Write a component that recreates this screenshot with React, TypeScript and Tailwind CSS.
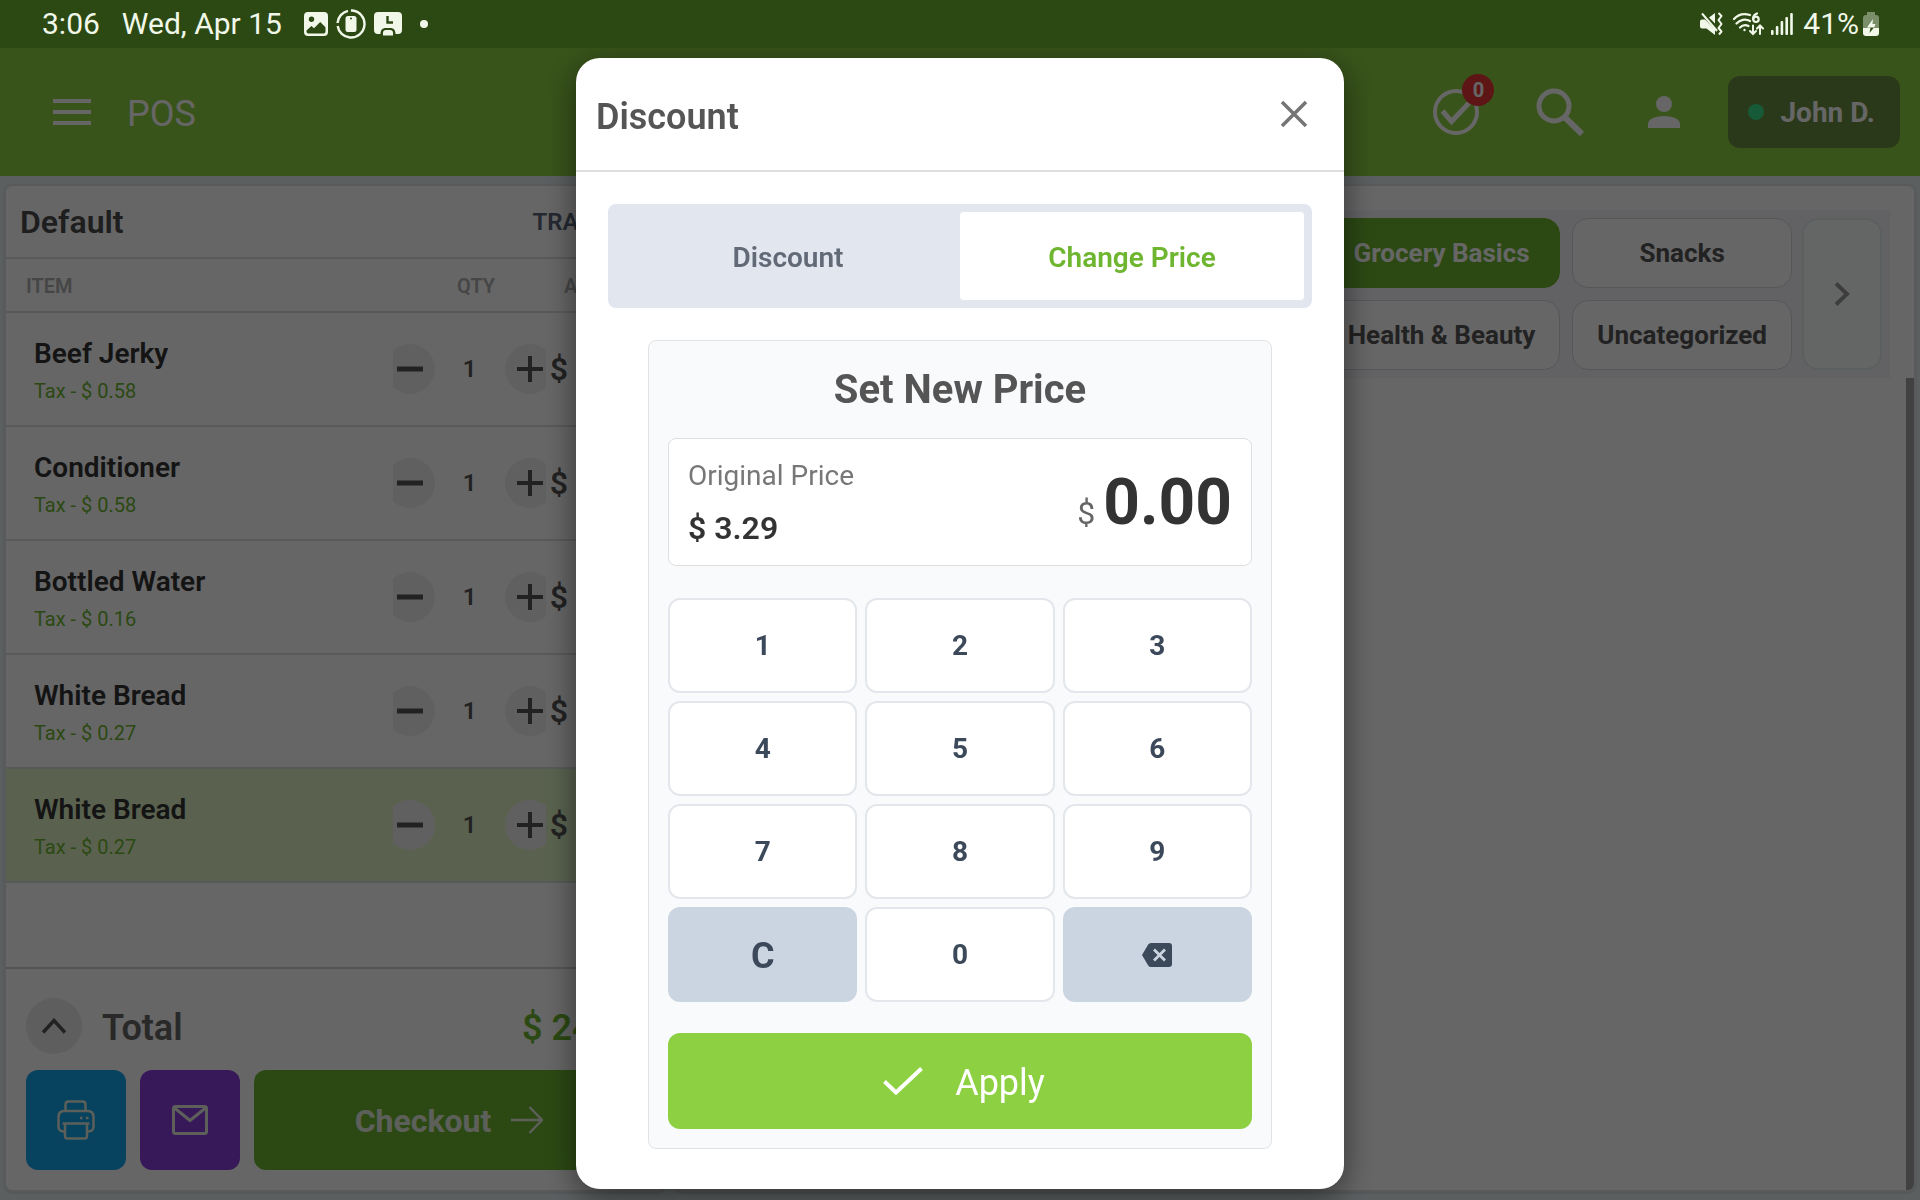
import { useState, type ReactNode } from "react";

const CART_ITEMS = [
  { name: "Beef Jerky", tax: "0.58", qty: 1, amount: "7.19" },
  { name: "Conditioner", tax: "0.58", qty: 1, amount: "7.19" },
  { name: "Bottled Water", tax: "0.16", qty: 1, amount: "1.99" },
  { name: "White Bread", tax: "0.27", qty: 1, amount: "3.29" },
  { name: "White Bread", tax: "0.27", qty: 1, amount: "3.29", selected: true },
];

const CATEGORIES = ["Grocery Basics", "Snacks", "Health & Beauty", "Uncategorized"];

const DIGITS = ["1", "2", "3", "4", "5", "6", "7", "8", "9"];

function StatusBar() {
  return (
    <div className="relative z-20 flex h-12 items-center justify-between bg-[#2c4913] pl-[42px] pr-[41px] text-[30px] leading-none text-[#f1f8ea]">
      <div className="flex items-center">
        <span>3:06</span>
        <span className="ml-[22px]">Wed, Apr 15</span>
        <svg className="ml-[22px] size-6" viewBox="0 0 24 24" fill="currentColor">
          <path
            fillRule="evenodd"
            d="M4 0h16a4 4 0 0 1 4 4v16a4 4 0 0 1-4 4H4a4 4 0 0 1-4-4V4a4 4 0 0 1 4-4Zm3.500 4.500a2.700 2.700 0 1 0 0 5.400 2.700 2.700 0 0 0 0-5.400ZM2.500 19.500q0 2 2 2h15q2 0 2-2v-4.200l-5.300-5.300-6.200 6.300-2.600-2.400-4.900 4.600Z"
          />
        </svg>
        <svg className="ml-2 size-[30px]" viewBox="0 0 30 30" fill="none">
          <circle cx="15" cy="15" r="13.500" stroke="currentColor" strokeWidth="2.400" strokeDasharray="60 3 17 3" transform="rotate(-85 15 15)" />
          <rect x="9.500" y="7" width="11" height="16" rx="2.500" fill="currentColor" />
          <circle cx="15" cy="9.500" r="1" fill="#2c4913" />
        </svg>
        <svg className="ml-2 h-6 w-7" viewBox="0 0 28 24" fill="none">
          <path d="M4 0h20a4 4 0 0 1 4 4v14a4 4 0 0 1-4 4h-2.500c0-4-2-6-5-6h-5c-3 0-5 2-5 6H4a4 4 0 0 1-4-4V4a4 4 0 0 1 4-4Z" fill="currentColor" />
          <path d="M13.500 4v6.500H19" stroke="#2c4913" strokeWidth="2.400" />
          <path d="M9 23.500V21q0-3 3-3h4q3 0 3 3v2.500Z" fill="currentColor" />
        </svg>
        <span className="ml-[18px] size-2 rounded-full bg-current" />
      </div>
      <div className="flex items-center">
        <svg className="h-6 w-6" viewBox="0 0 24 24" fill="currentColor">
          <path d="M0 9.500Q0 7.500 2 7.500h3L15 17.500V23L6.500 16.500H2q-2 0-2-2ZM9 5.500l6-4.500v10.500Z" />
          <path d="M2 1.500 17 19" stroke="currentColor" strokeWidth="2" />
          <path d="m18.500 1 3 3-3 4 3 4-3 4 3 3.500-2.500 3" fill="none" stroke="currentColor" strokeWidth="2" strokeLinejoin="round" />
        </svg>
        <svg className="ml-2 h-6 w-8" viewBox="0 0 32 24" fill="none" stroke="currentColor" strokeWidth="2.200" strokeLinecap="round">
          <path d="M2 7C6 2.500 12 1 18 3M4.500 11.500c3.500-4 9-5 13.500-2.500M8 15.500c2.500-2.500 5.500-3 8.500-1.500" />
          <circle cx="12.500" cy="18" r="1.200" fill="currentColor" stroke="none" />
          <path d="M25 1.500c-3 1-4 3-4 5.500" />
          <circle cx="24" cy="7.300" r="2.700" />
          <path d="M21 13.500V22m-3-3 3 3 3-3M28 22v-8.500m-3 3 3-3 3 3" strokeWidth="2" />
        </svg>
        <svg className="ml-[7px] h-6 w-[22px]" viewBox="0 0 22 24" fill="currentColor">
          <rect x="0" y="18" width="2.600" height="5" rx="1" />
          <rect x="4.800" y="14" width="2.600" height="9" rx="1" />
          <rect x="9.600" y="9" width="2.600" height="14" rx="1" />
          <rect x="14.400" y="5" width="2.600" height="18" rx="1" />
          <rect x="19.200" y="1" width="2.600" height="22" rx="1" />
        </svg>
        <span className="ml-[10px]">41%</span>
        <svg className="ml-1 h-6 w-4" viewBox="0 0 16 24" fill="currentColor">
          <path d="M4 0h8v3h1q3 0 3 3v10H0V6q0-3 3-3h1Z" opacity="0.400" />
          <path d="M0 16h16v5q0 3-3 3H3q-3 0-3-3Z" />
          <path d="m10 7-6 8.500h3.500v.500H11l1.500-4H9.500Z" />
          <path d="M7.500 15.500H11l-4.500 5.500Z" fill="#2c4913" />
        </svg>
      </div>
    </div>
  );
}

function AppHeader() {
  return (
    <header className="flex h-32 items-center justify-between bg-[#8dd143] pl-[53px] pr-5 text-white">
      <div className="flex items-center">
        <button type="button" aria-label="Menu" className="flex w-[38px] flex-col gap-[7px]">
          <span className="h-1 bg-white" />
          <span className="h-1 bg-white" />
          <span className="h-1 bg-white" />
        </button>
        <h1 className="ml-9 mt-1 text-4xl font-normal">POS</h1>
      </div>
      <div className="flex items-center">
        <button type="button" aria-label="Completed orders" className="relative">
          <svg className="size-12" viewBox="0 0 48 48" fill="none" stroke="currentColor" strokeWidth="4">
            <circle cx="24" cy="24" r="21" />
            <path d="m10.500 23 9 10.500L37 15" strokeWidth="5" />
          </svg>
          <span className="absolute -right-3.5 -top-3.5 flex size-8 items-center justify-center rounded-full bg-[#ea3639] text-xl font-bold">
            0
          </span>
        </button>
        <button type="button" aria-label="Search" className="ml-14">
          <svg className="size-12" viewBox="0 0 48 48" fill="none" stroke="currentColor" strokeWidth="5">
            <circle cx="18" cy="18" r="15" />
            <path d="M28.500 29 46 46" strokeWidth="6" />
          </svg>
        </button>
        <button type="button" aria-label="Account" className="ml-16">
          <svg className="size-8" viewBox="0 0 32 32" fill="currentColor">
            <circle cx="16" cy="8" r="8" />
            <path d="M0 32v-4c0-5.300 8-8 16-8s16 2.700 16 8v4Z" />
          </svg>
        </button>
        <button type="button" className="ml-12 flex h-[72px] items-center gap-4 rounded-xl bg-[#698e3f] px-5 pr-[25px] text-[28px] font-bold">
          <span className="size-4 rounded-full bg-[#3be08a]" />
          <span className="pt-0.5">John D.</span>
        </button>
      </div>
    </header>
  );
}

function QtyButton({ label, children }: { label: string; children: ReactNode }) {
  return (
    <button type="button" aria-label={label} className="flex size-[50px] shrink-0 items-center justify-center rounded-full bg-[#f0f0f2]">
      <svg className="size-[26px]" viewBox="0 0 26 26" stroke="#555555" strokeWidth="4">
        {children}
      </svg>
    </button>
  );
}

function CartPanel() {
  return (
    <section className="flex w-[662px] shrink-0 flex-col overflow-hidden rounded-lg border-2 border-[#dde1e4] bg-white shadow">
      <div className="flex h-[73px] items-center justify-between border-b-2 border-[#dcdfdf] pl-3.5 pr-3">
        <h2 className="text-[32px] font-semibold text-[#4c4c4c]">Default</h2>
        <button type="button" className="text-2xl font-semibold text-[#5a6478]">TRANSFER</button>
      </div>
      <table className="w-full table-fixed">
        <colgroup>
          <col />
          <col className="w-[153px]" />
          <col className="w-[118px]" />
        </colgroup>
        <thead>
          <tr className="h-[53px] border-b-2 border-[#dcdfdf] text-xl text-[#b0b0b0]">
            <th className="pl-5 pt-0.5 text-left font-semibold">ITEM</th>
            <th className="pl-16 pt-0.5 text-left font-semibold">QTY</th>
            <th className="pr-4 pt-0.5 text-right font-semibold">AMOUNT</th>
          </tr>
        </thead>
        <tbody>
          {CART_ITEMS.map((item, idx) => (
            <tr key={idx} className={`h-[114px] border-b-2 border-[#dcdfdf] ${item.selected ? "bg-[#e0f5c6]" : ""}`}>
              <td className="pl-7 pt-1">
                <p className="text-[28px] leading-[38px] font-semibold text-[#333333]">{item.name}</p>
                <p className="mt-0.5 text-xl leading-8 text-[#6eb630]">Tax - $ {item.tax}</p>
              </td>
              <td>
                <div className="flex items-center justify-center overflow-hidden">
                  <QtyButton label="Decrease quantity">
                    <path d="M0 13h26" strokeWidth="5" />
                  </QtyButton>
                  <span className="w-[70px] shrink-0 text-center text-2xl font-semibold text-[#555555]">{item.qty}</span>
                  <QtyButton label="Increase quantity">
                    <path d="M0 13h26M13 0v26" />
                  </QtyButton>
                </div>
              </td>
              <td className="whitespace-nowrap pr-6 text-right text-[32px] font-semibold text-[#555555]">$ {item.amount}</td>
            </tr>
          ))}
        </tbody>
      </table>
      <div className="mt-auto flex flex-col gap-4 border-t-2 border-[#cfd2d2] px-5 pb-5 pt-[29px]">
        <div className="flex items-center text-4xl font-semibold">
          <button type="button" aria-label="Show totals" className="flex size-14 items-center justify-center rounded-full bg-[#ebebed]">
            <svg className="h-4 w-6" viewBox="0 0 24 16" fill="none" stroke="#555555" strokeWidth="3.500">
              <path d="M1 14.500 12 2.500l11 12" />
            </svg>
          </button>
          <span className="ml-5 pt-1 text-[#666666]">Total</span>
          <span className="ml-auto pt-1 text-[#6eb630]">$ 24.81</span>
        </div>
        <div className="flex h-[100px] gap-3.5 text-[#e8efe0]">
          <button type="button" aria-label="Print" className="flex w-[100px] items-center justify-center rounded-xl bg-[#12a5ea]">
            <svg className="size-10" viewBox="0 0 40 40" fill="none" stroke="currentColor" strokeWidth="2.500" strokeLinejoin="round">
              <path d="M9.500 11V4.500q0-3 3-3h14q3 0 3 3V11" />
              <path d="M8.500 31.500h-1c-3 0-5-2-5-5V17c0-4 2.500-6 6-6h23c3.500 0 6 2 6 6v9.500c0 3-2 5-5 5h-1" />
              <path d="M6.500 23.500h27M9 23.500V36q0 2.500 2.500 2.500h17q2.500 0 2.500-2.500V23.500" />
              <path d="M24 18h2.500M30 18h2.500" />
            </svg>
          </button>
          <button type="button" aria-label="Email" className="flex w-[100px] items-center justify-center rounded-xl bg-[#8a3fe0]">
            <svg className="h-[30px] w-9" viewBox="0 0 36 30" fill="none" stroke="currentColor" strokeWidth="3">
              <rect x="1.500" y="1.500" width="33" height="27" rx="2" />
              <path d="m2.500 3 15.500 12.500L33.500 3" />
            </svg>
          </button>
          <button type="button" className="flex flex-1 items-center justify-center gap-5 rounded-xl bg-[#6eb630] text-[32px] font-bold">
            <span className="pt-0.5">Checkout</span>
            <svg className="h-7 w-8" viewBox="0 0 32 28" fill="none" stroke="currentColor" strokeWidth="2.500">
              <path d="M0 14h30M18.500 1 31 14 18.500 27" />
            </svg>
          </button>
        </div>
      </div>
    </section>
  );
}

function CatalogPanel() {
  return (
    <section className="relative flex flex-1 flex-col overflow-hidden rounded-lg border-2 border-[#dde1e4] bg-white pl-3 pr-6 pt-6 shadow">
      <div className="flex justify-end gap-2.5 bg-[#f6f6fb] px-2 py-2 text-[26px] font-bold">
        <div className="grid grid-cols-[auto_auto] gap-3">
          {CATEGORIES.map((name, idx) => (
            <button
              key={name}
              type="button"
              className={`h-[70px] rounded-2xl border px-6 ${idx === 0 ? "border-[#6eb630] bg-[#6eb630] text-white" : "border-[#d6d8dd] bg-white text-[#555555]"}`}
            >
              {name}
            </button>
          ))}
        </div>
        <button type="button" aria-label="More categories" className="flex w-20 items-center justify-center rounded-2xl border-2 border-[#e4edec] bg-[#fafffe]">
          <svg className="h-6 w-4" viewBox="0 0 16 24" fill="none" stroke="#9a9a9a" strokeWidth="4">
            <path d="m2 1.500 11 10.500L2 22.500" />
          </svg>
        </button>
      </div>
      <div className="absolute bottom-0 right-0 top-48 w-2 bg-[#a4a4a4]" />
    </section>
  );
}

function DiscountDialog() {
  const [tab, setTab] = useState("Change Price");
  const [price] = useState("0.00");

  return (
    <div className="fixed inset-0 z-10 flex items-center justify-center bg-black/60 pb-px pt-12">
      <div role="dialog" aria-label="Discount" className="w-full max-w-3xl rounded-3xl bg-white shadow-[0_8px_32px_rgba(0,0,0,0.5)]">
        <div className="flex h-[114px] items-center justify-between border-b-2 border-[#dedede] pl-5 pr-9">
          <h2 className="mt-1.5 text-4xl font-semibold text-[#555555]">Discount</h2>
          <button type="button" aria-label="Close">
            <svg className="size-7" viewBox="0 0 28 28" fill="none" stroke="#757575" strokeWidth="3.500">
              <path d="m2 2 24 24M26 2 2 26" />
            </svg>
          </button>
        </div>
        <div className="px-8 pb-10 pt-8">
          <div className="flex h-[104px] rounded-lg bg-[#e1e6ef] p-2">
            {["Discount", "Change Price"].map((name) => (
              <button
                key={name}
                type="button"
                onClick={() => setTab(name)}
                className={`flex-1 rounded pt-1 text-[28px] font-semibold ${tab === name ? "bg-white text-[#6eb630]" : "text-[#626a77]"}`}
              >
                {name}
              </button>
            ))}
          </div>

          <div className="mx-10 mt-8 rounded-lg border border-[#dfe3e5] bg-[#f9fafc] px-[19px] pb-[19px] pt-[25px]">
            <h3 className="text-center text-[40px] leading-[48px] font-bold text-[#555555]">Set New Price</h3>
            <div className="mt-6 flex h-32 items-center justify-between rounded-lg border border-[#dddfe1] bg-white px-[19px]">
              <div>
                <p className="text-[28px] leading-10 text-[#777777]">Original Price</p>
                <p className="mt-3 text-[32px] leading-10 font-semibold text-[#333333]">$ 3.29</p>
              </div>
              <div className="flex items-baseline gap-2 pt-1">
                <span className="text-[32px] text-[#666666]">$</span>
                <span className="text-[64px] leading-none font-bold text-[#333333]">{price}</span>
              </div>
            </div>

            <div className="mt-8 grid auto-rows-[95px] grid-cols-3 gap-2 text-[28px] font-bold text-[#3b495a]">
              {DIGITS.map((digit) => (
                <button key={digit} type="button" className="rounded-xl border-2 border-[#e3e7eb] bg-white">
                  {digit}
                </button>
              ))}
              <button type="button" className="rounded-xl bg-[#cbd5e1] pt-0.5 text-4xl">C</button>
              <button type="button" className="rounded-xl border-2 border-[#e3e7eb] bg-white">0</button>
              <button type="button" aria-label="Backspace" className="flex items-center justify-center rounded-xl bg-[#cbd5e1]">
                <svg className="h-6 w-8" viewBox="0 0 32 24">
                  <path d="M10 0h18q3 0 3 3v18q0 3-3 3H10q-1.800 0-2.800-1.500L1 12l6.200-10.500Q8.200 0 10 0Z" fill="currentColor" />
                  <path d="m13 6.500 11 11m0-11-11 11" stroke="#cbd5e1" strokeWidth="2.800" />
                </svg>
              </button>
            </div>

            <button type="button" className="mt-[31px] flex h-24 w-full items-center justify-center gap-8 rounded-xl bg-[#8dd143] pl-2 text-4xl text-white">
              <svg className="h-7 w-10" viewBox="0 0 40 28" fill="none" stroke="currentColor" strokeWidth="4">
                <path d="M1.500 14.500 13 25.500 38.500 1.500" />
              </svg>
              <span className="pt-1">Apply</span>
            </button>
          </div>
        </div>
      </div>
    </div>
  );
}

export default function App() {
  return (
    <div className="flex min-h-screen flex-col bg-[#e6eef1] font-['Roboto',sans-serif]">
      <StatusBar />
      <AppHeader />
      <main className="flex flex-1 gap-2 px-1 pb-2 pt-2">
        <CartPanel />
        <CatalogPanel />
      </main>
      <DiscountDialog />
    </div>
  );
}
